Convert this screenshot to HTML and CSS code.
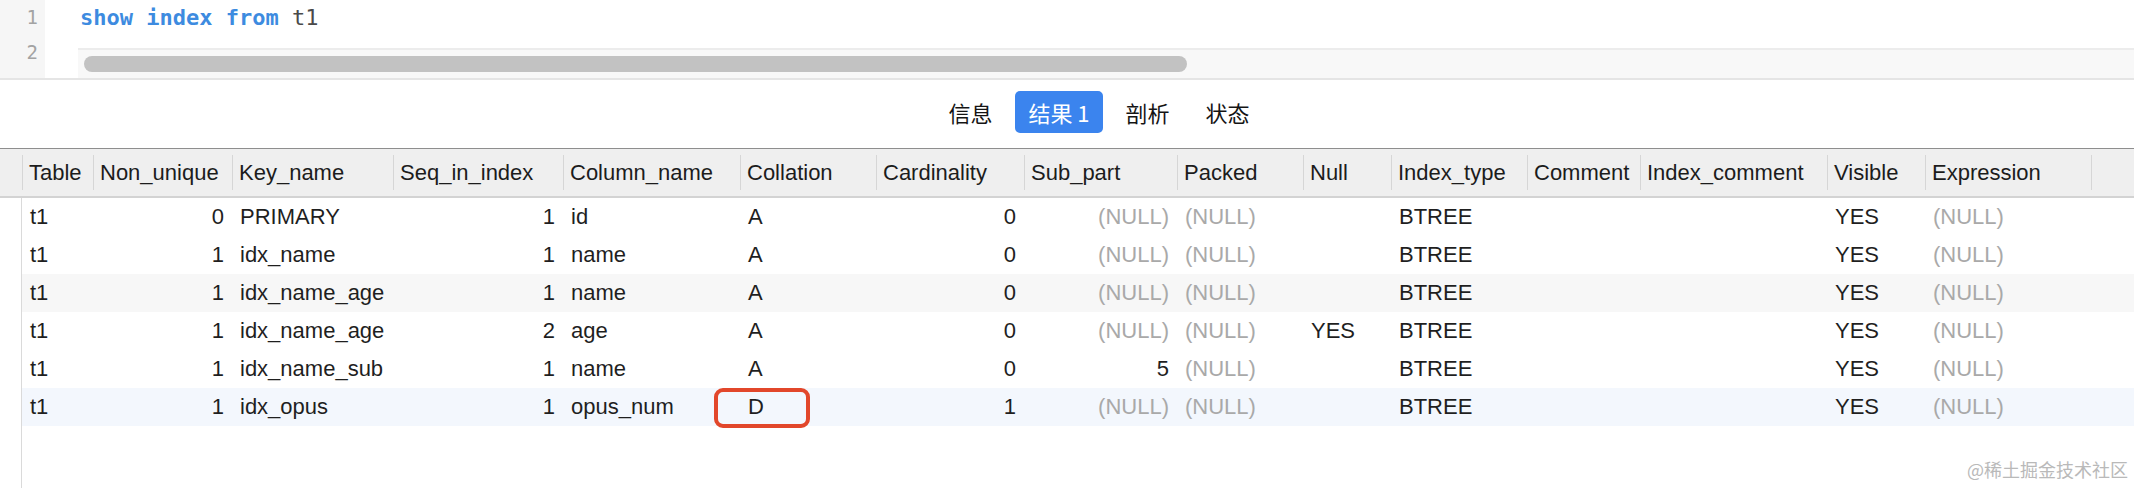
FILE: index.html
```html
<!DOCTYPE html>
<html lang="zh-CN">
<head>
<meta charset="utf-8">
<title>show index from t1</title>
<link rel="stylesheet" href="styles.css">
</head>
<body>
<div class="app">
  <div class="editor">
    <div class="gutter">
      <div class="ln">1</div>
      <div class="ln">2</div>
    </div>
    <div class="code">
      <div class="code-line"><span class="kw">show</span> <span class="kw">index</span> <span class="kw">from</span> <span class="id">t1</span></div>
      <div class="hscroll"><div class="thumb"></div></div>
    </div>
  </div>

  <div class="tabbar">
    <div class="tab">信息</div>
    <div class="tab active">结果 1</div>
    <div class="tab">剖析</div>
    <div class="tab">状态</div>
  </div>

  <div class="grid">
    <div class="row head">
      <div class="gut"></div>
      <div class="hc">Table</div>
      <div class="hc">Non_unique</div>
      <div class="hc">Key_name</div>
      <div class="hc">Seq_in_index</div>
      <div class="hc">Column_name</div>
      <div class="hc">Collation</div>
      <div class="hc">Cardinality</div>
      <div class="hc">Sub_part</div>
      <div class="hc">Packed</div>
      <div class="hc">Null</div>
      <div class="hc">Index_type</div>
      <div class="hc">Comment</div>
      <div class="hc">Index_comment</div>
      <div class="hc">Visible</div>
      <div class="hc">Expression</div>
      <div class="hc"></div>
    </div>

    <div class="row body">
      <div class="gut"></div>
      <div class="c">t1</div><div class="c r">0</div><div class="c">PRIMARY</div><div class="c r">1</div><div class="c">id</div><div class="c">A</div><div class="c r">0</div><div class="c r null">(NULL)</div><div class="c null">(NULL)</div><div class="c"></div><div class="c">BTREE</div><div class="c"></div><div class="c"></div><div class="c">YES</div><div class="c null">(NULL)</div><div class="c"></div>
    </div>
    <div class="row body">
      <div class="gut"></div>
      <div class="c">t1</div><div class="c r">1</div><div class="c">idx_name</div><div class="c r">1</div><div class="c">name</div><div class="c">A</div><div class="c r">0</div><div class="c r null">(NULL)</div><div class="c null">(NULL)</div><div class="c"></div><div class="c">BTREE</div><div class="c"></div><div class="c"></div><div class="c">YES</div><div class="c null">(NULL)</div><div class="c"></div>
    </div>
    <div class="row body alt">
      <div class="gut"></div>
      <div class="c">t1</div><div class="c r">1</div><div class="c">idx_name_age</div><div class="c r">1</div><div class="c">name</div><div class="c">A</div><div class="c r">0</div><div class="c r null">(NULL)</div><div class="c null">(NULL)</div><div class="c"></div><div class="c">BTREE</div><div class="c"></div><div class="c"></div><div class="c">YES</div><div class="c null">(NULL)</div><div class="c"></div>
    </div>
    <div class="row body">
      <div class="gut"></div>
      <div class="c">t1</div><div class="c r">1</div><div class="c">idx_name_age</div><div class="c r">2</div><div class="c">age</div><div class="c">A</div><div class="c r">0</div><div class="c r null">(NULL)</div><div class="c null">(NULL)</div><div class="c">YES</div><div class="c">BTREE</div><div class="c"></div><div class="c"></div><div class="c">YES</div><div class="c null">(NULL)</div><div class="c"></div>
    </div>
    <div class="row body">
      <div class="gut"></div>
      <div class="c">t1</div><div class="c r">1</div><div class="c">idx_name_sub</div><div class="c r">1</div><div class="c">name</div><div class="c">A</div><div class="c r">0</div><div class="c r">5</div><div class="c null">(NULL)</div><div class="c"></div><div class="c">BTREE</div><div class="c"></div><div class="c"></div><div class="c">YES</div><div class="c null">(NULL)</div><div class="c"></div>
    </div>
    <div class="row body sel">
      <div class="gut"></div>
      <div class="c">t1</div><div class="c r">1</div><div class="c">idx_opus</div><div class="c r">1</div><div class="c">opus_num</div><div class="c mark-cell"><span class="mark"></span>D</div><div class="c r">1</div><div class="c r null">(NULL)</div><div class="c null">(NULL)</div><div class="c"></div><div class="c">BTREE</div><div class="c"></div><div class="c"></div><div class="c">YES</div><div class="c null">(NULL)</div><div class="c"></div>
    </div>
    <div class="filler"><div class="gut"></div></div>
  </div>

  <div class="watermark">@稀土掘金技术社区</div>
</div>
</body>
</html>
```

FILE: styles.css
```css
html, body {
  margin: 0;
  padding: 0;
  background: #ffffff;
}

.app {
  position: relative;
  width: 2134px;
  height: 488px;
  overflow: hidden;
  display: flex;
  flex-direction: column;
  font-family: "Liberation Sans", Arial, "Noto Sans CJK SC", sans-serif;
  color: #1f1f1f;
}

/* ---------- editor ---------- */
.editor {
  display: flex;
  height: 78px;
  border-bottom: 2px solid #e5e5e5;
  flex: none;
}

.gutter {
  width: 45px;
  background: #f6f6f6;
  display: flex;
  flex-direction: column;
}

.ln {
  height: 35px;
  line-height: 35px;
  text-align: right;
  padding-right: 7px;
  font-family: "DejaVu Sans Mono", "Liberation Mono", monospace;
  font-size: 19px;
  color: #a3a3a3;
}

.code {
  flex: 1;
  display: flex;
  flex-direction: column;
  padding-left: 33px;
  min-width: 0;
}

.code-line {
  height: 35px;
  line-height: 35px;
  padding-left: 2px;
  font-family: "DejaVu Sans Mono", "Liberation Mono", monospace;
  font-size: 22px;
  white-space: pre;
}

.kw {
  color: #3d8be0;
  font-weight: bold;
}

.id {
  color: #4a4a4a;
}

.hscroll {
  margin-top: auto;
  height: 28px;
  background: #f8f8f8;
  border-top: 2px solid #ececec;
  display: flex;
  align-items: center;
  padding-left: 6px;
}

.thumb {
  width: 1103px;
  height: 16px;
  border-radius: 8px;
  background: #c2c2c2;
}

/* ---------- tabs ---------- */
.tabbar {
  flex: none;
  height: 57px;
  padding-top: 11px;
  border-bottom: 1px solid #8e8e8e;
  display: flex;
  justify-content: center;
  align-items: flex-start;
  gap: 10px;
  padding-left: 64px;
  font-family: "Noto Sans CJK SC", "Liberation Sans", sans-serif;
}

.tab {
  height: 42px;
  line-height: 42px;
  padding: 0 13px;
  font-size: 22px;
  color: #141414;
  border-radius: 5px;
}

.tab.active {
  background: #3b84ee;
  color: #ffffff;
}

/* ---------- grid ---------- */
.grid {
  flex: 1;
  display: flex;
  flex-direction: column;
  font-size: 22px;
}

.row {
  display: grid;
  grid-template-columns: 22px 71px 139px 161px 170px 177px 136px 148px 153px 126px 88px 136px 113px 187px 98px 166px 1fr;
}

.row.head {
  height: 47px;
  background: #efefef;
  border-bottom: 2px solid #d3d3d3;
  align-items: center;
}

.hc {
  height: 35px;
  line-height: 35px;
  border-left: 1px solid #d6d6d6;
  padding-left: 6px;
  color: #1c1c1c;
  white-space: nowrap;
  overflow: hidden;
}

.row.body {
  height: 38px;
  line-height: 38px;
}

.row.body .gut,
.filler .gut {
  border-right: 1px solid #dadada;
  background: #ffffff;
}

.row.alt {
  background: #f7f7f7;
}

.row.sel {
  background: #f3f7fd;
}

.c {
  padding: 0 8px;
  color: #1f1f1f;
  white-space: nowrap;
  overflow: visible;
}

.c.r {
  text-align: right;
}

.c.null {
  color: #a9a9a9;
}

.mark-cell {
  position: relative;
}

.mark {
  position: absolute;
  left: -26px;
  top: 0;
  width: 88px;
  height: 32px;
  border: 4px solid #e2472b;
  border-radius: 9px;
}

.filler {
  flex: 1;
  display: flex;
}

.filler .gut {
  width: 22px;
  box-sizing: border-box;
}

.watermark {
  position: absolute;
  right: 6px;
  bottom: 6px;
  font-family: "Noto Sans CJK SC", sans-serif;
  font-size: 18px;
  color: #b9b9b9;
}
```
